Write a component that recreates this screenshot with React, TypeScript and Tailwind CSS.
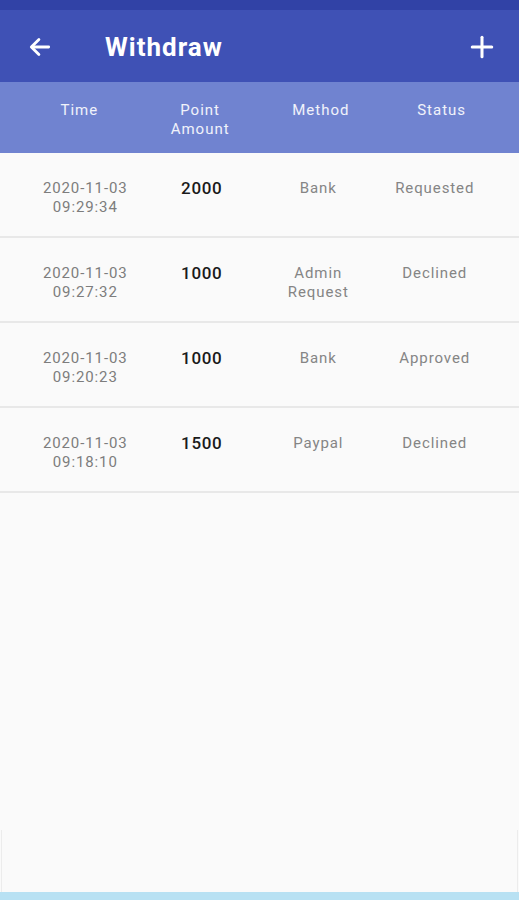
import React from 'react';

interface WithdrawRow {
  date: string;
  time: string;
  amount: string;
  method: string[];
  status: string;
}

const rows: WithdrawRow[] = [
  { date: '2020-11-03', time: '09:29:34', amount: '2000', method: ['Bank'], status: 'Requested' },
  { date: '2020-11-03', time: '09:27:32', amount: '1000', method: ['Admin', 'Request'], status: 'Declined' },
  { date: '2020-11-03', time: '09:20:23', amount: '1000', method: ['Bank'], status: 'Approved' },
  { date: '2020-11-03', time: '09:18:10', amount: '1500', method: ['Paypal'], status: 'Declined' },
];

function BackArrow() {
  return (
    <svg width="26" height="26" viewBox="0 0 24 24" fill="none" stroke="white" strokeWidth="2.6" strokeLinecap="round" strokeLinejoin="round">
      <path d="M20 12H5" />
      <path d="M11 5l-7 7 7 7" />
    </svg>
  );
}

function PlusIcon() {
  return (
    <svg width="26" height="26" viewBox="0 0 24 24" fill="none" stroke="white" strokeWidth="2.8" strokeLinecap="round">
      <path d="M12 3v18" />
      <path d="M3 12h18" />
    </svg>
  );
}

export default function App() {
  return (
    <div
      className="w-[519px] h-[900px] bg-[#fafafa] flex flex-col overflow-hidden"
      style={{ fontFamily: 'Roboto, "Liberation Sans", sans-serif' }}
    >
      {/* status bar (cut off) */}
      <div className="h-[10px] bg-[#3142a6]" />

      {/* app bar */}
      <div className="h-[72px] bg-[#3f51b5] flex items-center px-[27px] pt-[2px]">
        <BackArrow />
        <span className="ml-[52px] text-white text-[26px] font-bold tracking-[1px]">Withdraw</span>
        <div className="ml-auto mr-[-3px]">
          <PlusIcon />
        </div>
      </div>

      {/* table header */}
      <div className="h-[71px] bg-[#7083d0] grid grid-cols-4 pl-[19px] pr-[17px] pt-[19px] text-white/90 text-[15px] leading-[19px] text-center tracking-[1px]">
        <div>Time</div>
        <div>
          Point
          <br />
          Amount
        </div>
        <div>Method</div>
        <div>Status</div>
      </div>

      {/* rows */}
      {rows.map((row, i) => (
        <div
          key={i}
          className="h-[85px] grid grid-cols-4 pl-[27px] pr-[26px] pt-[26px] text-center border-b-2 border-[#e8e8e8]"
        >
          <div className="text-[15px] leading-[19px] text-[#7d7d7d] tracking-[0.9px]">
            {row.date}
            <br />
            {row.time}
          </div>
          <div className="text-[17px] leading-[19px] font-medium text-[#1a1a1a] tracking-[0.7px]">{row.amount}</div>
          <div className="text-[15px] leading-[19px] text-[#858585] tracking-[0.9px]">
            {row.method.map((m, j) => (
              <div key={j}>{m}</div>
            ))}
          </div>
          <div className="text-[15px] leading-[19px] text-[#858585] tracking-[0.9px]">{row.status}</div>
        </div>
      ))}

      <div className="flex-1" />

      {/* faint card edge near the bottom */}
      <div className="h-[62px] mx-[1px] border-x border-[#ececec]" />

      {/* bottom strip */}
      <div className="h-[8px] bg-[#b8e1f3]" />
    </div>
  );
}
